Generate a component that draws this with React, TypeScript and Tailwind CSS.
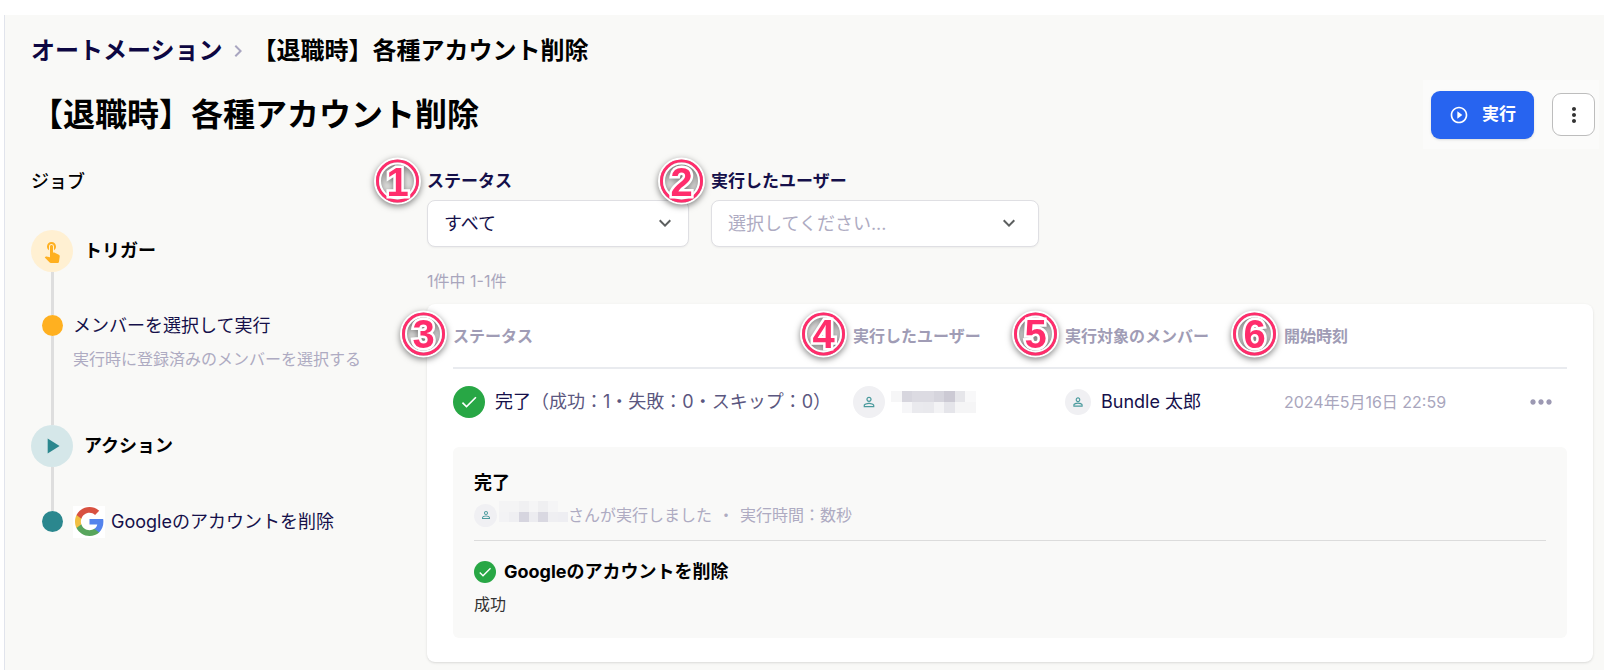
import React from "react";
import {
  MdCheck,
  MdChevronRight,
  MdExpandMore,
  MdMoreHoriz,
  MdMoreVert,
  MdPersonOutline,
  MdPlayArrow,
  MdPlayCircleOutline,
  MdTouchApp,
} from "react-icons/md";

type MarkerProps = { n: number };

function Marker({ n }: MarkerProps) {
  return (
    <span className="pointer-events-none absolute top-1/2 -left-[53px] z-10 flex size-[47px] -translate-y-1/2 items-center justify-center rounded-full border-2 border-white drop-shadow-[0_2px_3px_rgba(0,0,0,0.5)]">
      <span className="absolute inset-0 rounded-full border-3 border-[#ff2d6c]" />
      <span className="absolute inset-[3px] rounded-full border-2 border-white bg-black/5" />
      <span className="relative font-['Liberation_Sans',sans-serif] text-[40px] leading-[36px] font-bold text-[#ff2d6c] [-webkit-text-stroke:5px_white] [paint-order:stroke_fill]">
        {n}
      </span>
    </span>
  );
}

type StepProps = {
  icon: React.ReactNode;
  className?: string;
  last?: boolean;
  children: React.ReactNode;
};

function Step({ icon, className = "", last, children }: StepProps) {
  return (
    <li className={`flex ${className}`}>
      <div className="flex w-[42px] shrink-0 flex-col items-center">
        {icon}
        {!last && <div className="w-[3px] grow bg-[#dedede]" />}
      </div>
      {children}
    </li>
  );
}

function Mosaic({ rows, className }: { rows: string[][]; className: string }) {
  return (
    <span className={`flex flex-col ${className}`} aria-hidden="true">
      {rows.map((row, i) => (
        <span key={i} className="flex grow">
          {row.map((color, j) => (
            <span key={j} className="grow" style={{ backgroundColor: color }} />
          ))}
        </span>
      ))}
    </span>
  );
}

const userMosaic = [
  ["#f6f6f7", "#d7d6de", "#dcdbe2", "#dcdbe2", "#d6d5dd", "#cccad4", "#e6e6ea", "#f8f8f9"],
  ["#ffffff", "#f6f6f8", "#eaeaee", "#e9e9ed", "#f3f3f5", "#e5e5ea", "#f5f5f6", "#f5f5f6"],
];

const detailMosaic = [
  ["#f4f4f5", "#f4f4f5", "#f0f0f2", "#f5f5f6", "#efeff1", "#f5f5f6", "#f9f9f8"],
  ["#f3f3f5", "#efeff2", "#d6d5df", "#ececf0", "#d9d8e1", "#efeff2", "#eeeef2"],
];

export default function App() {
  return (
    <div className="flex min-h-screen flex-col bg-white pt-[15px] pl-1 font-[Inter,'Noto_Sans_CJK_JP',sans-serif] text-[#15104a]">
      <main className="grow border-l border-[#e1e4ec] bg-[#f9f9f7] pt-5 pl-[26px]">
        <nav className="flex items-center text-2xl leading-8 font-bold">
          <a href="#" className="text-[#0d0742]">オートメーション</a>
          <MdChevronRight className="mx-[3px] size-6 text-[#a9a6c0]" />
          <span className="text-black">【退職時】各種アカウント削除</span>
        </nav>

        <header className="mt-[13px] flex items-center justify-between pr-[5px]">
          <h1 className="text-[32px] leading-10 font-bold text-black">【退職時】各種アカウント削除</h1>
          <div className="flex h-[69px] items-center gap-[18px] bg-[#fbfbfa] pr-1 pl-2">
            <button className="flex h-12 items-center gap-[13px] rounded-[9px] bg-[#2764f0] px-[18px] text-[17px] font-bold text-white shadow-sm">
              <MdPlayCircleOutline className="size-5" />
              実行
            </button>
            <button
              aria-label="メニュー"
              className="flex size-[43px] items-center justify-center rounded-[9px] border border-[#bdbdbd] bg-white text-[#333]"
            >
              <MdMoreVert className="size-6" />
            </button>
          </div>
        </header>

        <div className="mt-[18px] grid grid-cols-[396px_1fr] pr-[11px] pb-2">
          <section>
            <h2 className="mt-px text-lg leading-7 font-medium text-black">ジョブ</h2>
            <ol className="mt-[34px] text-lg">
              <Step
                className="h-[85px]"
                icon={
                  <span className="flex size-[42px] items-center justify-center rounded-full bg-[#fff0d2]">
                    <MdTouchApp className="size-6 text-[#ffb020]" />
                  </span>
                }
              >
                <h3 className="ml-[11px] leading-[42px] font-bold text-black">トリガー</h3>
              </Step>
              <Step className="h-[110px]" icon={<span className="size-[21px] rounded-full bg-[#ffb020]" />}>
                <div>
                  <p className="leading-[21px]">メンバーを選択して実行</p>
                  <p className="mt-[11px] text-base leading-6 text-[#aeabc2]">実行時に登録済みのメンバーを選択する</p>
                </div>
              </Step>
              <Step
                className="h-[86px]"
                icon={
                  <span className="flex size-[42px] items-center justify-center rounded-full bg-[#d5e7e9]">
                    <MdPlayArrow className="size-[26px] text-[#2b878e]" />
                  </span>
                }
              >
                <h3 className="ml-[11px] leading-[42px] font-bold text-black">アクション</h3>
              </Step>
              <Step className="h-[21px]" last icon={<span className="size-[21px] rounded-full bg-[#2b878e]" />}>
                <p className="flex items-center gap-[6px] leading-[21px]">
                  <span className="flex size-8 items-center justify-center bg-white">
                    <svg viewBox="0 0 48 48" className="size-[29px]">
                      <path fill="#5383ec" d="M47 24.5c0-1.6-.1-3.1-.4-4.5H24v9h12.900c-.6 3-2.300 5.500-4.800 7.200v6h7.800C44.400 38 47 31.800 47 24.500z" />
                      <path fill="#58a55c" d="M24 48c6.500 0 12-2.100 15.900-5.800l-7.800-6c-2.100 1.400-4.900 2.300-8.100 2.300-6.300 0-11.600-4.200-13.500-9.900h-8v6.200C6.500 42.600 14.600 48 24 48z" />
                      <path fill="#f1bf42" d="M10.500 28.600c-.5-1.500-.8-3-.8-4.600s.3-3.200.8-4.600v-6.200h-8C.9 16.500 0 20.100 0 24s.9 7.500 2.500 10.800z" />
                      <path fill="#d85140" d="M24 9.500c3.500 0 6.700 1.200 9.200 3.600l6.900-6.900C35.900 2.400 30.500 0 24 0 14.600 0 6.500 5.400 2.500 13.200l8 6.200C12.400 13.700 17.700 9.500 24 9.500z" />
                    </svg>
                  </span>
                  Googleのアカウントを削除
                </p>
              </Step>
            </ol>
          </section>

          <section>
            <div className="flex gap-[22px]">
              <div className="w-[262px]">
                <label htmlFor="status" className="relative block text-[17px] leading-7 font-bold">
                  <Marker n={1} />
                  ステータス
                </label>
                <div className="relative mt-[5px]">
                  <select
                    id="status"
                    className="h-[47px] w-full appearance-none rounded-lg border border-[#dfdfe3] bg-white pl-4 text-lg shadow-xs"
                  >
                    <option>すべて</option>
                  </select>
                  <MdExpandMore className="pointer-events-none absolute top-[11px] right-3 size-6 text-[#5c5f5f]" />
                </div>
              </div>
              <div className="w-[328px]">
                <label htmlFor="user" className="relative block text-[17px] leading-7 font-bold">
                  <Marker n={2} />
                  実行したユーザー
                </label>
                <div className="relative mt-[5px]">
                  <select
                    id="user"
                    className="h-[47px] w-full appearance-none rounded-lg border border-[#dfdfe3] bg-white pl-4 text-lg text-[#aeabc2] shadow-xs"
                  >
                    <option>選択してください...</option>
                  </select>
                  <MdExpandMore className="pointer-events-none absolute top-[11px] right-[18px] size-6 text-[#5c5f5f]" />
                </div>
              </div>
            </div>

            <p className="mt-[22px] text-base leading-6 text-[#a9a6bd]">1件中 1-1件</p>

            <div className="mt-[11px] rounded-lg bg-white px-[26px] pb-6 shadow-sm">
              <table className="w-full table-fixed text-left">
                <thead>
                  <tr className="h-16 border-b-2 border-[#e9ebef] text-base text-[#a09cb5]">
                    <th className="w-[400px] font-bold">
                      <span className="relative pt-1"><Marker n={3} />ステータス</span>
                    </th>
                    <th className="w-[212px] font-bold">
                      <span className="relative pt-1"><Marker n={4} />実行したユーザー</span>
                    </th>
                    <th className="w-[219px] font-bold">
                      <span className="relative pt-1"><Marker n={5} />実行対象のメンバー</span>
                    </th>
                    <th className="font-bold">
                      <span className="relative pt-1"><Marker n={6} />開始時刻</span>
                    </th>
                  </tr>
                </thead>
                <tbody>
                  <tr className="h-[66px]">
                    <td>
                      <div className="flex items-center text-lg whitespace-nowrap">
                        <span className="mr-[10px] flex size-8 items-center justify-center rounded-full bg-[#28a745] text-white">
                          <MdCheck className="size-5" />
                        </span>
                        完了<span className="text-[#5b5780]">（成功：1・失敗：0・スキップ：0）</span>
                      </div>
                    </td>
                    <td>
                      <div className="flex items-center gap-[6px]">
                        <span className="flex size-8 items-center justify-center rounded-full bg-[#f0f0f3]">
                          <MdPersonOutline className="size-4 stroke-[#4a9a9d] text-[#4a9a9d]" />
                        </span>
                        <Mosaic rows={userMosaic} className="h-[22px] w-[85px]" />
                      </div>
                    </td>
                    <td>
                      <div className="flex items-center gap-[10px] text-lg">
                        <span className="flex size-[26px] items-center justify-center rounded-full bg-[#f0f0f3]">
                          <MdPersonOutline className="size-[14px] stroke-[#4a9a9d] text-[#4a9a9d]" />
                        </span>
                        Bundle 太郎
                      </div>
                    </td>
                    <td>
                      <div className="flex items-center justify-between pr-[10px] text-[#a9a6bd]">
                        <time>2024年5月16日 22:59</time>
                        <button aria-label="詳細">
                          <MdMoreHoriz className="size-8 text-[#9c99b3]" />
                        </button>
                      </div>
                    </td>
                  </tr>
                  <tr>
                    <td colSpan={4} className="pt-[13px]">
                      <div className="rounded-md bg-[#f9f9f8] px-[21px] py-[22px]">
                        <h3 className="text-lg leading-7 font-bold text-black">完了</h3>
                        <div className="mt-[6px] flex h-6 items-center text-base text-[#aeabc2]">
                          <span className="mr-[2px] flex size-[23px] items-center justify-center rounded-full bg-[#f0f0f3]">
                            <MdPersonOutline className="size-3 stroke-[#4a9a9d] text-[#4a9a9d]" />
                          </span>
                          <Mosaic rows={detailMosaic} className="mb-[7px] h-[21px] w-[69px]" />
                          <span>さんが実行しました</span>
                          <span className="w-[28px] text-center">・</span>
                          <span>実行時間：数秒</span>
                        </div>
                        <hr className="mt-[13px] border-[#dcdcdc]" />
                        <h4 className="mt-[17px] flex items-center gap-2 text-lg leading-7 font-bold text-black">
                          <span className="flex size-[22px] items-center justify-center rounded-full bg-[#28a745] text-white">
                            <MdCheck className="size-4" />
                          </span>
                          Googleのアカウントを削除
                        </h4>
                        <p className="mt-[6px] text-base leading-6 text-[#333]">成功</p>
                      </div>
                    </td>
                  </tr>
                </tbody>
              </table>
            </div>
          </section>
        </div>
      </main>
    </div>
  );
}
